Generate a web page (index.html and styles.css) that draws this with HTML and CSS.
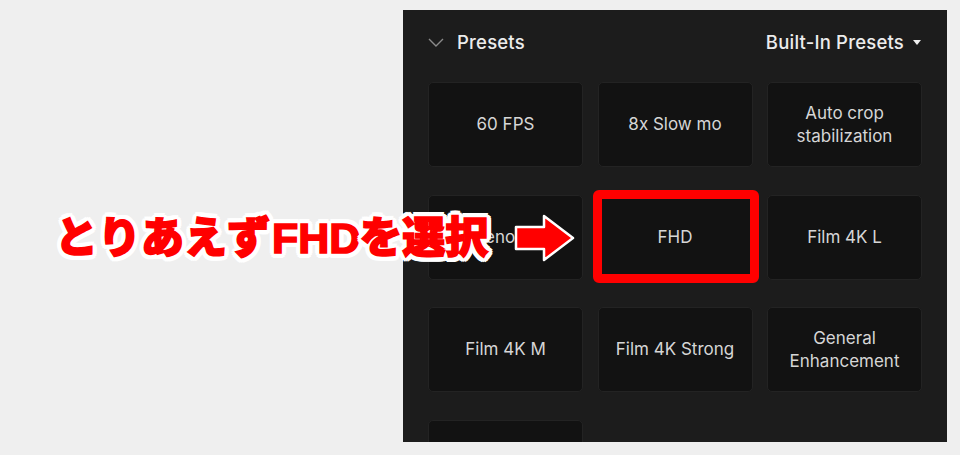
FILE: index.html
```html
<!DOCTYPE html>
<html lang="ja">
    <head>
        <meta charset="UTF-8">
        <meta name="viewport" content="width=device-width, initial-scale=1.0">
        <title>Presets</title>
        <link rel="stylesheet" href="styles.css">
    </head>
    <body>
        <div class="panel">
            <div class="panel-head">
                <div class="head-title">
                    <svg class="chevron" width="16" height="9" viewBox="0 0 16 9"><polyline points="1,1 8,8 15,1" fill="none" stroke="#8a8a8a" stroke-width="1.4" /></svg>
                    <span>Presets</span>
                </div>
                <div class="head-select">Built-In Presets <span class="caret"></span></div>
            </div>
            <ul class="preset-grid">
                <li class="preset">60 FPS</li>
                <li class="preset">8x Slow mo</li>
                <li class="preset">Auto crop<br>stabilization</li>
                <li class="preset">Denoise</li>
                <li class="preset picked">FHD <span class="mark"></span></li>
                <li class="preset">Film 4K L</li>
                <li class="preset">Film 4K M</li>
                <li class="preset">Film 4K Strong</li>
                <li class="preset">General<br>Enhancement</li>
                <li class="preset"></li>
            </ul>
        </div>

        <div class="note">とりあえず<span class="latin">FHD</span>を選択</div>
        <svg class="arrow" width="64" height="50" viewBox="0 0 64 50">
            <polygon points="4,14 32,14 32,3 61,25 32,47 32,36 4,36" fill="#ff0000" stroke="#fff" stroke-width="2.5" stroke-linejoin="round" />
        </svg>
    </body>
</html>
```

FILE: styles.css
```css
html, body { margin: 0; padding: 0; }
body { position: relative; height: 455px; overflow: hidden; background: #efefef; font-family: Inter, "Noto Sans", sans-serif; }

.panel { width: 544px; height: 432px; margin: 10px 0 0 403px; background: #1c1c1c; overflow: hidden; box-sizing: border-box; padding: 20px 25px 0; }
.panel-head { display: flex; align-items: center; justify-content: space-between; height: 24px; color: #ececec; font-size: 18.5px; font-weight: 500; letter-spacing: 0.2px; }
.head-title { display: flex; align-items: center; gap: 13px; }
.chevron { display: block; }
.head-select { display: flex; align-items: center; gap: 9px; margin-right: 1px; }
.caret { width: 0; height: 0; border-left: 4.5px solid transparent; border-right: 4.5px solid transparent; border-top: 5px solid #f0f0f0; }

.preset-grid { list-style: none; margin: 28px 0 0; padding: 0; display: grid; grid-template-columns: repeat(3, 155px); column-gap: 14.5px; row-gap: 27.5px; }
.preset { position: relative; height: 85px; box-sizing: border-box; display: flex; align-items: center; justify-content: center; text-align: center; background: #121212; border: 1px solid #232323; border-radius: 5px; color: #d6d6d6; font-size: 17px; line-height: 23px; }
.mark { position: absolute; top: -6px; left: -6px; right: -7px; bottom: -4px; border: 9.5px solid #ff0000; border-radius: 6px; }

/* red caption, white rim drawn with shadows so the stroke can thicken the letters */
.note { position: absolute; left: 55px; top: 213px; font-family: "Noto Sans CJK JP", sans-serif; font-size: 43px; line-height: 43px; font-weight: 900; color: #ff0000; -webkit-text-stroke: 1.6px #ff0000; white-space: nowrap;
    text-shadow: 5px 0 #fff, -5px 0 #fff, 0 5px #fff, 0 -5px #fff, 3.5px 3.5px #fff, -3.5px 3.5px #fff, 3.5px -3.5px #fff, -3.5px -3.5px #fff,
        4.6px 1.9px #fff, -4.6px 1.9px #fff, 4.6px -1.9px #fff, -4.6px -1.9px #fff, 1.9px 4.6px #fff, -1.9px 4.6px #fff, 1.9px -4.6px #fff, -1.9px -4.6px #fff; }
.latin { font-family: "Liberation Sans", sans-serif; font-weight: 700; margin: 0 -1px 0 2px; }
.arrow { position: absolute; left: 512px; top: 213px; }
```
